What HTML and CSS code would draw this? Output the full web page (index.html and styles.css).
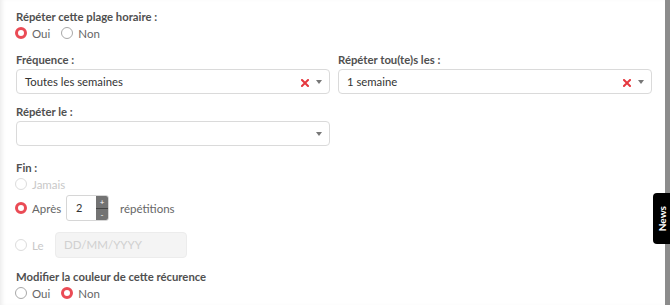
FILE: index.html
```html
<!DOCTYPE html>
<html lang="fr">
<head>
<meta charset="utf-8">
<link rel="stylesheet" href="styles.css">
</head>
<body>
<div class="page">
  <div class="content">
    <div class="label first">Répéter cette plage horaire :</div>
    <div class="radios">
      <span class="radio checked"></span><span class="rtext">Oui</span>
      <span class="radio"></span><span class="rtext">Non</span>
    </div>

    <div class="cols">
      <div class="col">
        <div class="label">Fréquence :</div>
        <div class="select">
          <span class="value">Toutes les semaines</span>
          <svg class="clear" width="8" height="8" viewBox="0 0 8 8"><path d="M1 1L7 7M7 1L1 7" stroke="#e5383f" stroke-width="2" stroke-linecap="square"/></svg>
          <span class="caret"></span>
        </div>
      </div>
      <div class="col">
        <div class="label">Répéter tou(te)s les :</div>
        <div class="select">
          <span class="value">1 semaine</span>
          <svg class="clear" width="8" height="8" viewBox="0 0 8 8"><path d="M1 1L7 7M7 1L1 7" stroke="#e5383f" stroke-width="2" stroke-linecap="square"/></svg>
          <span class="caret"></span>
        </div>
      </div>
    </div>

    <div class="cols">
      <div class="col">
        <div class="label">Répéter le :</div>
        <div class="select">
          <span class="value"></span>
          <span class="caret"></span>
        </div>
      </div>
    </div>

    <div class="label fin">Fin :</div>
    <div class="radios">
      <span class="radio disabled"></span><span class="rtext muted">Jamais</span>
    </div>
    <div class="radios apres">
      <span class="radio checked"></span><span class="rtext w-apres">Après</span>
      <div class="number">
        <span class="num">2</span>
        <span class="spin"><span class="plus">+</span><span class="minus">-</span></span>
      </div>
      <span class="rtext">répétitions</span>
    </div>
    <div class="radios le">
      <span class="radio disabled"></span><span class="rtext muted w-le">Le</span>
      <div class="date">DD/MM/YYYY</div>
    </div>

    <div class="label modif">Modifier la couleur de cette récurence</div>
    <div class="radios">
      <span class="radio"></span><span class="rtext">Oui</span>
      <span class="radio checked"></span><span class="rtext">Non</span>
    </div>
  </div>
  <div class="strip"></div>
  <div class="news"><span>News</span></div>
</div>
</body>
</html>
```
FILE: styles.css
```css
html, body {
  margin: 0;
  padding: 0;
  background: #fff;
  font-family: Lato, "Open Sans", sans-serif;
}
.page {
  position: relative;
  display: flex;
  width: 670px;
  height: 305px;
  overflow: hidden;
}
.content {
  flex: 1;
  padding: 10px 13px 0 16px;
  box-shadow: inset 4px 0 4px -2px rgba(0,0,0,0.08);
}
.strip {
  width: 5px;
  background: #8c8c8c;
}
.label {
  font-size: 11.3px;
  font-weight: 700;
  color: #505050;
  line-height: 14px;
  height: 14px;
}
.radios {
  display: flex;
  align-items: center;
  height: 16px;
  margin-top: 1px;
}
.radio {
  box-sizing: border-box;
  width: 12px;
  height: 12px;
  border-radius: 50%;
  border: 1px solid #a8a8a8;
  background: #fff;
  margin-left: -1px;
  flex: none;
}
.radio.checked {
  border: 3.5px solid #ea4b55;
}
.radio.disabled {
  border-color: #dcdcdc;
}
.rtext {
  font-size: 11.5px;
  color: #666;
  margin-left: 5px;
  margin-right: 12px;
}
.rtext.muted {
  color: #c8c8c8;
}
.rtext.w-apres {
  width: 29px;
  margin-right: 5px;
}
.rtext.w-le {
  width: 18px;
  margin-right: 5px;
}
.cols {
  display: flex;
  gap: 8px;
  margin-top: 12px;
}
.cols + .cols {
  margin-top: 11px;
}
.col {
  width: 314px;
}
.col .label {
  margin-bottom: 2px;
}
.select {
  box-sizing: border-box;
  height: 25px;
  border: 1px solid #dadada;
  border-radius: 4px;
  display: flex;
  align-items: center;
  padding: 0 7px 0 8px;
}
.value {
  flex: 1;
  font-size: 11.3px;
  color: #333;
}
.clear {
  margin-right: 7px;
  margin-top: 2px;
}
.caret {
  width: 0;
  height: 0;
  border-left: 3.5px solid transparent;
  border-right: 3.5px solid transparent;
  border-top: 4px solid #777;
}
.label.fin {
  margin-top: 15px;
}
.radios.apres {
  height: 26px;
  margin-top: 3px;
}
.number {
  display: flex;
  box-sizing: border-box;
  height: 26px;
  width: 43px;
  border: 1px solid #d6d6d6;
  border-radius: 3px;
  overflow: hidden;
  margin-right: 6px;
}
.num {
  flex: 1;
  font-size: 11px;
  color: #333;
  line-height: 24px;
  padding-left: 9px;
}
.spin {
  width: 12px;
  background: #737373;
  display: flex;
  flex-direction: column;
}
.spin span {
  flex: 1;
  color: #fff;
  font-size: 8px;
  line-height: 12px;
  text-align: center;
}
.plus {
  border-bottom: 1px solid #444;
}
.radios.le {
  height: 26px;
  margin-top: 11px;
}
.date {
  box-sizing: border-box;
  height: 26px;
  width: 132px;
  background: #f4f4f4;
  border: 1px solid #ececec;
  border-radius: 4px;
  font-size: 11.5px;
  color: #d0d0d0;
  line-height: 24px;
  padding-left: 8px;
}
.label.modif {
  margin-top: 12px;
}
.news {
  position: absolute;
  left: 653px;
  top: 193px;
  width: 17px;
  height: 51px;
  background: #000;
  border-radius: 4px 0 0 4px;
  display: flex;
  align-items: center;
  justify-content: center;
}
.news span {
  color: #fff;
  font-size: 10px;
  font-weight: 700;
  writing-mode: vertical-rl;
  transform: rotate(180deg);
}
```
